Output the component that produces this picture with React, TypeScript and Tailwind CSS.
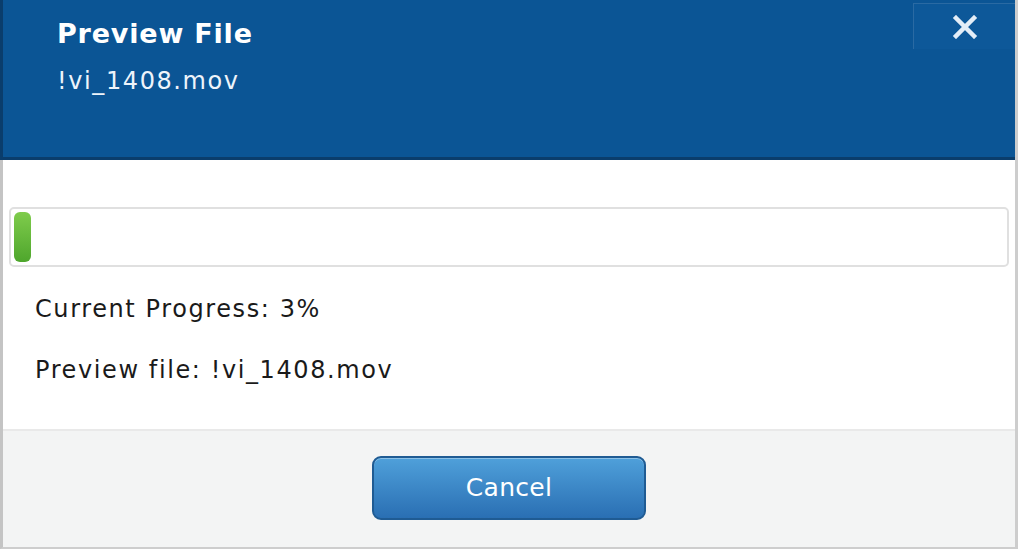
export default function App() {
  const progress = 3;
  const fileName = '!vi_1408.mov';

  return (
    <div className="w-[1020px] h-[551px] bg-white" style={{ fontFamily: '"DejaVu Sans", Verdana, sans-serif' }}>
      <div className="flex h-[549px] w-[1018px] flex-col border-x-[3px] border-b-2 border-[#cdcdcd] border-l-[#c4c4c4]">
        {/* Header */}
        <div className="relative -ml-[3px] flex h-[160px] shrink-0 flex-col border-b-[3px] border-l-[3px] border-[#0a3d6c] bg-[#0b5595] pl-[54px] pt-[16px] text-white">
          <h1 className="text-[27px] font-bold leading-[36px] tracking-[0.8px]">Preview File</h1>
          <p className="mt-[14px] text-[24px] leading-[30px] tracking-[1.6px] text-[#eef4fb]">{fileName}</p>
          <button
            type="button"
            className="absolute right-0 top-[3px] flex h-[46px] w-[102px] items-center justify-center border-l border-t border-[#2a6aa3] bg-[#0d5899]"
          >
            <svg width="28" height="24" viewBox="0 0 28 24">
              <path d="M5 3 L23 21 M23 3 L5 21" stroke="#e3edf7" strokeWidth="4.5" strokeLinecap="square" />
            </svg>
          </button>
        </div>

        {/* Body */}
        <div className="flex flex-1 flex-col px-[6px] pt-[47px]">
          <div className="flex h-[60px] items-stretch rounded-[5px] border-2 border-[#e0e0e0] bg-white p-[3px]">
            <div
              className="min-w-[17px] rounded-[6px] bg-gradient-to-b from-[#7fcc4c] to-[#4ea62c]"
              style={{ width: `${progress * 0.58}%` }}
            />
          </div>
          <div className="mt-[28px] pl-[26px] text-[24px] leading-[28px] tracking-[1.6px] text-[#1a1a1a]">
            <p>Current Progress: {progress}%</p>
            <p className="mt-[33px]">Preview file: {fileName}</p>
          </div>
        </div>

        {/* Footer */}
        <div className="flex h-[118px] shrink-0 items-center justify-center border-t-2 border-[#e9e9e9] bg-[#f3f4f4]">
          <button
            type="button"
            className="-mt-[3px] h-[64px] w-[274px] rounded-[9px] border-2 border-[#1f5b93] bg-gradient-to-b from-[#4fa0da] to-[#2a6fb3] text-[25px] tracking-[0.3px] text-white shadow-[inset_0_1px_0_rgba(255,255,255,0.35)]"
          >
            Cancel
          </button>
        </div>
      </div>
    </div>
  );
}
